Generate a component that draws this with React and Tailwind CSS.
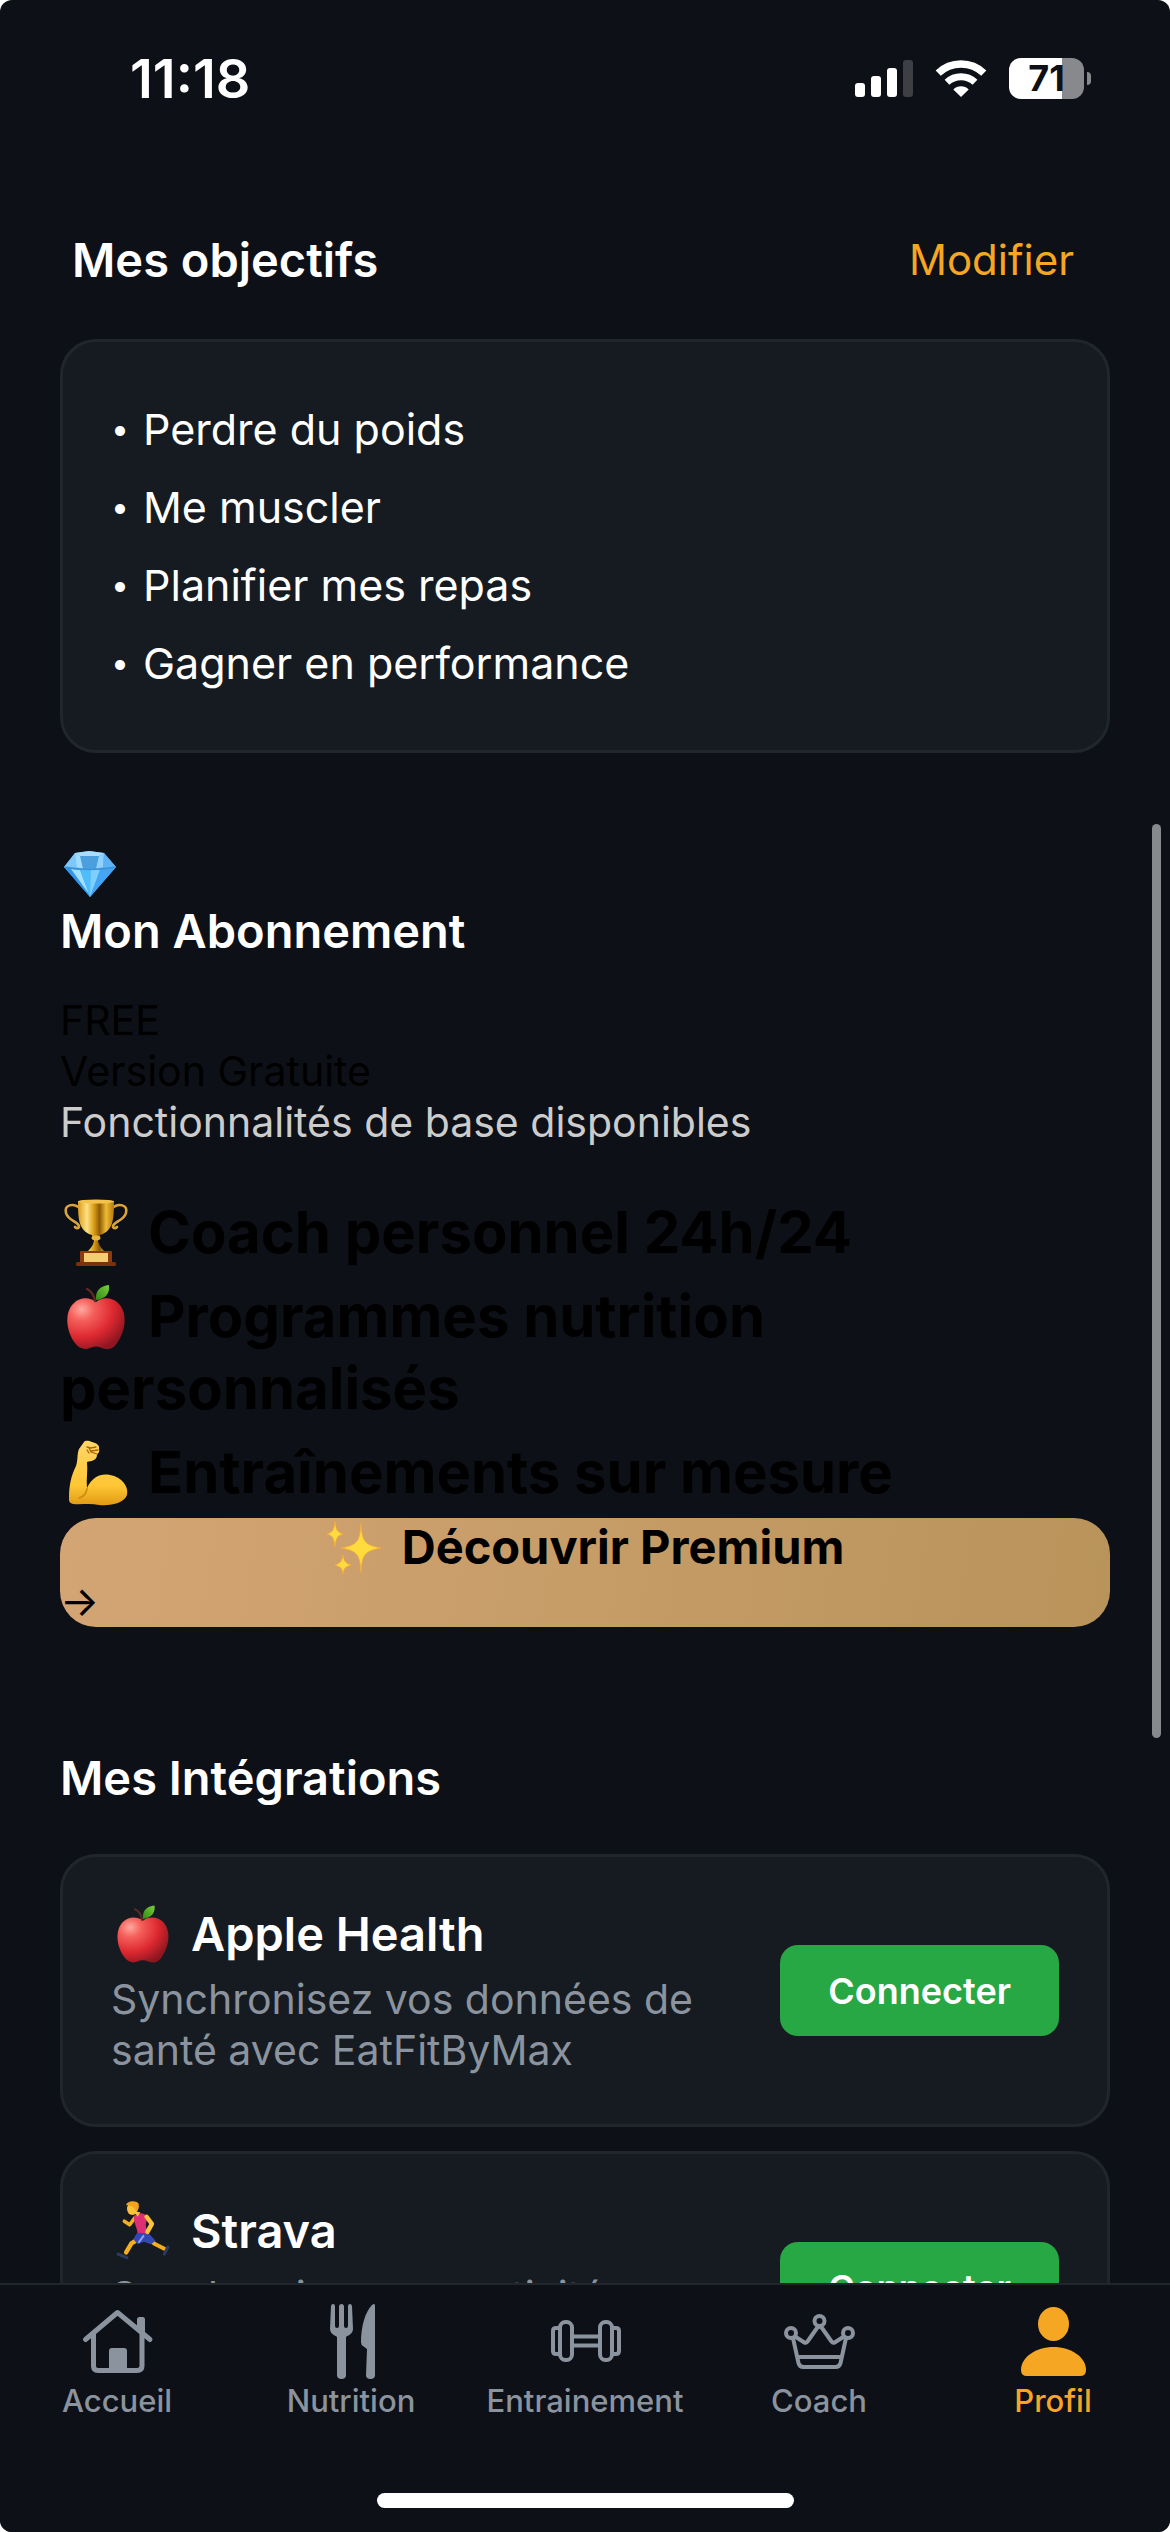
import React from "react";

function SignalIcon() {
  return (
    <svg className="h-[38px] w-[58px]" viewBox="0 0 58 38" aria-hidden="true">
      <g fill="#fff">
        <rect x="0" y="24" width="10" height="14" rx="3" />
        <rect x="16" y="17" width="10" height="21" rx="3" />
        <rect x="32" y="9" width="10" height="29" rx="3" />
      </g>
      <rect x="48" y="1" width="10" height="37" rx="3" fill="#3d3f45" />
    </svg>
  );
}

function WifiIcon() {
  return (
    <svg className="h-[38px] w-[52px]" viewBox="0 0 52 38" aria-hidden="true">
      <g fill="none" stroke="#fff">
        <path d="M3.2 14.2 A33 33 0 0 1 48.8 14.2" strokeWidth="7.4" />
        <path d="M12 23.2 A20.5 20.5 0 0 1 40 23.2" strokeWidth="7" />
      </g>
      <path d="M26 38 L18.3 30.4 A11 11 0 0 1 33.7 30.4 Z" fill="#fff" />
    </svg>
  );
}

function Battery() {
  return (
    <div className="flex items-center gap-[3px]">
      <div className="flex h-[41px] w-[75px] items-center justify-center rounded-xl bg-[linear-gradient(to_right,#fff_71%,#88898d_71%)] text-[36px] leading-none font-bold text-[#0d1017]">
        71
      </div>
      <div className="h-[13px] w-1 rounded-r-full bg-[#88898d]" />
    </div>
  );
}

function Diamond({ className }) {
  return (
    <svg className={className} viewBox="0 0 60 56" aria-hidden="true">
      <path d="M15 7 L29 5 L44 7 L56 21 L30 51 L4 21 Z" fill="#4fb2f8" />
      <path d="M4 21 L15 7 L19 22 Z" fill="#7cc8fb" />
      <path d="M15 7 L29 5 L44 7 L39 10 H20 Z" fill="#a9dcfd" />
      <path d="M20 10 H39 L36 23 H23 Z" fill="#4a9fdc" />
      <path d="M15 7 L20 10 L23 23 L17 21 Z" fill="#a4dcff" />
      <path d="M44 7 L39 10 L36 23 L43 21 Z" fill="#93d1fd" />
      <path d="M44 7 L56 21 L43 22 Z" fill="#5db4f5" />
      <path d="M4 21 L19 23 L30 51 Z" fill="#2e96ee" />
      <path d="M11 23 L20 24 L29 48 Z" fill="#a5e1ff" />
      <path d="M20 24 H40 L30 51 Z" fill="#50bdfb" />
      <path d="M31 24 H40 L30 51 Z" fill="#7dd0ff" />
      <path d="M40 24 L56 21 L30 51 Z" fill="#43a5f3" />
      <path d="M4 21 Q30 26 56 21" stroke="#3d93d5" strokeWidth="1.5" fill="none" />
    </svg>
  );
}

function Trophy({ className }) {
  return (
    <svg className={className} viewBox="0 0 72 72" aria-hidden="true">
      <defs>
        <linearGradient id="cup" x1="0" x2="1">
          <stop offset="0" stopColor="#d99a1c" />
          <stop offset=".25" stopColor="#ffe184" />
          <stop offset=".45" stopColor="#d69a12" />
          <stop offset=".6" stopColor="#8c5a06" />
          <stop offset=".78" stopColor="#eebb35" />
          <stop offset="1" stopColor="#b0780c" />
        </linearGradient>
      </defs>
      <path d="M21 12 C13 5 4 8 6 16 C8 24 20 25 19 30 C18 32 16 31 15 30" fill="none" stroke="#dba53a" strokeWidth="2.6" strokeLinecap="round" />
      <path d="M51 12 C59 5 68 8 66 16 C64 24 52 25 53 30 C54 32 56 31 57 30" fill="none" stroke="#dba53a" strokeWidth="2.6" strokeLinecap="round" />
      <path d="M18 4 C18 20 18 34 32 38 L34 44 C33 49 30 52 27 55 H45 C42 52 39 49 38 44 L40 38 C54 34 54 20 54 4 Z" fill="url(#cup)" />
      <ellipse cx="36" cy="4.5" rx="18" ry="2" fill="#f3c34b" />
      <ellipse cx="36" cy="41" rx="4.5" ry="2.4" fill="#e8b63c" />
      <rect x="20" y="54" width="32" height="13" rx="1" fill="#8a3b10" />
      <rect x="24" y="56" width="24" height="9" fill="#f3cd72" />
      <rect x="16" y="65" width="40" height="4" rx="1.5" fill="#7d300c" />
    </svg>
  );
}

function Apple({ className }) {
  return (
    <svg className={className} viewBox="0 0 72 72" aria-hidden="true">
      <defs>
        <radialGradient id="apple-skin" cx=".25" cy=".22" r=".85">
          <stop offset="0" stopColor="#ffa9a0" />
          <stop offset=".25" stopColor="#f5615c" />
          <stop offset=".65" stopColor="#dc2830" />
          <stop offset="1" stopColor="#8e1620" />
        </radialGradient>
        <linearGradient id="apple-leaf" x1="0" x2="1" y1="1" y2="0">
          <stop offset="0" stopColor="#2f8a14" />
          <stop offset="1" stopColor="#79cf3a" />
        </linearGradient>
      </defs>
      <path d="M36 21 C42 16 52 16 58 22 C68 31 66 50 57 62 C53 69 46 69 42 67 C38 65 34 65 30 67 C25 69 19 68 15 62 C6 50 4 31 14 22 C20 16 30 16 36 21 Z" fill="url(#apple-skin)" />
      <path d="M35 20 C34 14 31 10 27 8" fill="none" stroke="#5b2b20" strokeWidth="2.4" strokeLinecap="round" />
      <path d="M36 19 C35 10 40 5 49 4 C50 12 46 18 36 19 Z" fill="url(#apple-leaf)" />
    </svg>
  );
}

function FlexedArm({ className }) {
  return (
    <svg className={className} viewBox="0 0 72 72" aria-hidden="true">
      <defs>
        <linearGradient id="arm-skin" x1="0" x2="0" y1="0" y2="1">
          <stop offset="0" stopColor="#ffd667" />
          <stop offset=".7" stopColor="#ffc634" />
          <stop offset="1" stopColor="#e09a14" />
        </linearGradient>
      </defs>
      <path d="M19 12 L24 5 C26 3 29 4 32 5 C36 6 40 8 39 12 C40 15 38 16 37 18 C37 23 32 24 27 25 C28 34 26 42 27 51 C32 40 41 36 50 38 C62 40 69 50 67 58 C64 66 52 69 39 68 C30 66 21 68 13 67 C9 66 9 64 9 61 C9 49 11 39 16 29 C18 24 17 16 19 12 Z" fill="url(#arm-skin)" />
      <path d="M27 52 C26 57 23 60 19 61" fill="none" stroke="#d08d13" strokeWidth="1.8" strokeLinecap="round" />
      <path d="M27 10 L31 11 L36 10 M38 13 L31 14 M29 11 L31 15 L37 17 M27 13 L29 16" fill="none" stroke="#a8660c" strokeWidth="1.3" strokeLinecap="round" />
    </svg>
  );
}

function Sparkles({ className }) {
  return (
    <svg className={className} viewBox="0 0 56 56" aria-hidden="true">
      <g fill="#ffdb3d" stroke="#f6a93a" strokeWidth=".8">
        <path d="M35 4 C36 22 38 26 55 29 C38 32 36 36 35 54 C34 36 32 32 15 29 C32 26 34 22 35 4 Z" />
        <path d="M9 2 C10 11 11 13 17 15 C11 17 10 19 9 28 C8 19 7 17 1 15 C7 13 8 11 9 2 Z" />
        <path d="M17 36 C18 42 19 44 25 46 C19 48 18 49 17 55 C16 49 15 48 9 46 C15 44 16 42 17 36 Z" />
      </g>
    </svg>
  );
}

function Runner({ className }) {
  return (
    <svg className={className} viewBox="0 0 72 72" aria-hidden="true">
      <g fill="none" strokeLinecap="round" strokeLinejoin="round">
        <path d="M27 21 L21 29 L15 25" stroke="#f5b021" strokeWidth="4" />
        <path d="M31 45 L23 50 L17 60" stroke="#f5ae1d" strokeWidth="5" />
        <path d="M43 46 L50 51 L60 56" stroke="#f5ae1d" strokeWidth="4.5" />
        <path d="M8 62 L18 66" stroke="#2b3b60" strokeWidth="3.6" />
        <path d="M60 62 L64 54" stroke="#2b3b60" strokeWidth="3.4" />
      </g>
      <path d="M30 37 L42 38 L50 47 L45 51 L37 48 L30 51 L25 45 Z" fill="#3347b5" />
      <path d="M37 41 L31 49" stroke="#8fa6ee" strokeWidth="2.2" />
      <path d="M26 19 C30 15 37 15 41 20 L39 29 L41 39 L30 38 C29 31 25 26 26 19 Z" fill="#dd2f74" />
      <path d="M40 20 L46 28 L41 37" fill="none" stroke="#fcc23a" strokeWidth="5" strokeLinecap="round" strokeLinejoin="round" />
      <ellipse cx="24" cy="11" rx="6" ry="7" fill="#fcc23a" />
      <path d="M17 7 C18 2 28 1 31 5 C32 9 31 13 28 14 C27 10 24 7 17 7 Z" fill="#f2a31c" />
      <path d="M26 14 L33 15 L30 20 Z" fill="#fcc23a" />
    </svg>
  );
}

const tabIcon = "h-20 w-20";

function HomeIcon() {
  return (
    <svg className={tabIcon} viewBox="0 0 80 80" aria-hidden="true">
      <g fill="none" stroke="currentColor" strokeWidth="5" strokeLinecap="round" strokeLinejoin="round">
        <path d="M8.5 39.5 L40.5 12.5 L73 39.5" />
        <path d="M16.5 34 V66 Q16.5 70.5 21 70.5 H60 Q65 70.5 65 66 V34" />
      </g>
      <path d="M60 29 V19.5 Q60 17 62.500 17 H65.500 Q68 17 68 19.500 V36 Z" fill="currentColor" />
      <path d="M32 71 V51 Q32 48 35 48 H47 Q50 48 50 51 V71 Z" fill="currentColor" />
    </svg>
  );
}

function CutleryIcon() {
  return (
    <svg className={tabIcon} viewBox="0 0 80 80" aria-hidden="true">
      <g fill="currentColor">
        <path d="M20 6 Q20.500 4 22 4 Q24 4 24 6 V26 Q24 28 26 28 Q28 28 28 26 V6 Q28.500 4 30.500 4 Q32.500 4 33 6 V26 Q33 28 35 28 Q37 28 37 26 V6 Q37 4 39 4 Q40.500 4 41 6 L42 29 Q42 34 35.500 36.500 L35 37 V75 Q35 79 30.500 79 Q26 79 26 75 V37 L25.500 36.500 Q19 34 19 29 Z" />
        <path d="M61 5 Q64 2.500 64 6 V75 Q64 79 59.500 79 Q55 79 55 75 L56 49 L52 46 Q50 45 50 42 C50 27 54 12 61 5 Z" />
      </g>
    </svg>
  );
}

function DumbbellIcon() {
  return (
    <svg className={tabIcon} viewBox="0 0 80 80" aria-hidden="true">
      <g fill="none" stroke="currentColor" strokeWidth="4">
        <rect x="15" y="22" width="12" height="38" rx="5.500" />
        <rect x="55" y="22" width="12" height="38" rx="5.500" />
        <path d="M15 28 H11 Q8 28 8 31 V51 Q8 54 11 54 H15" />
        <path d="M67 28 H71 Q74 28 74 31 V51 Q74 54 71 54 H67" />
        <path d="M28 36.500 H54 M28 45.500 H54" />
      </g>
    </svg>
  );
}

function CrownIcon() {
  return (
    <svg className={tabIcon} viewBox="0 0 80 80" aria-hidden="true">
      <g fill="none" stroke="currentColor" strokeWidth="4" strokeLinejoin="round">
        <circle cx="12" cy="33" r="5" />
        <circle cx="40.500" cy="21" r="5" />
        <circle cx="69" cy="33" r="5" />
        <path d="M16 36.500 L25 42.200 Q27 43.500 28.500 41.500 L38 28 Q40.500 25.500 43 28 L52.500 41.500 Q54 43.500 56 42.200 L65 36.500" />
        <path d="M14 38 L19.500 63 Q20.500 67 24.500 67 H56.500 Q60.500 67 61.500 63 L67 38" />
        <path d="M18 57 H63" />
      </g>
    </svg>
  );
}

function PersonIcon() {
  return (
    <svg className={tabIcon} viewBox="0 0 80 80" aria-hidden="true">
      <g fill="currentColor">
        <ellipse cx="40.500" cy="24" rx="15.500" ry="17" />
        <path d="M8 70 C8 57 23 47 40.500 47 S73 57 73 70 Q73 76 67 76 H14 Q8 76 8 70 Z" />
      </g>
    </svg>
  );
}

const goals = ["Perdre du poids", "Me muscler", "Planifier mes repas", "Gagner en performance"];

const perks = [
  { Icon: Trophy, label: "Coach personnel 24h/24" },
  { Icon: Apple, label: "Programmes nutrition personnalisés" },
  { Icon: FlexedArm, label: "Entraînements sur mesure" },
];

const integrations = [
  { Icon: Apple, name: "Apple Health", text: "Synchronisez vos données de santé avec EatFitByMax" },
  { Icon: Runner, name: "Strava", text: "Synchronisez vos activités sportives" },
];

const tabs = [
  { Icon: HomeIcon, label: "Accueil" },
  { Icon: CutleryIcon, label: "Nutrition" },
  { Icon: DumbbellIcon, label: "Entrainement" },
  { Icon: CrownIcon, label: "Coach" },
  { Icon: PersonIcon, label: "Profil", active: true },
];

const heading = "text-[47px] leading-[57px] font-semibold text-white";
const card = "rounded-[36px] border-[3px] border-[#21262d] bg-[#161b22] p-12";

function Integration({ Icon, name, text }) {
  return (
    <li className={card + " flex items-center justify-between gap-12"}>
      <div className="flex min-w-0 flex-1 flex-col gap-3">
        <h3 className={heading + " flex items-center gap-4"}>
          <Icon className="-my-2 h-[66px] w-16 shrink-0" />
          {name}
        </h3>
        <p className="text-[41px] leading-[51px] text-[#8b949e]">{text}</p>
      </div>
      <button
        type="button"
        aria-label={"Connecter " + name}
        className="h-[91px] shrink-0 rounded-[18px] bg-[#28a745] px-12 text-[36px] font-semibold text-white"
      >
        Connecter
      </button>
    </li>
  );
}

export default function App() {
  return (
    <div className="flex h-screen flex-col overflow-hidden rounded-xl bg-[#0d1017] font-[Inter,'Liberation_Sans',sans-serif] text-black">
      <header className="flex h-[156px] shrink-0 items-center justify-between pr-[79px] pl-[130px] text-white">
        <time className="text-[54px] font-semibold">11:18</time>
        <div className="flex items-center gap-[22px]">
          <SignalIcon />
          <WifiIcon />
          <Battery />
        </div>
      </header>

      <main className="relative min-h-0 flex-1 overflow-hidden px-[60px] pt-[75px]">
        <section>
          <div className="flex items-center justify-between pr-9 pl-3">
            <h2 className={heading}>Mes objectifs</h2>
            <button type="button" className="text-[42px] leading-[51px] text-[#f5a623]">
              Modifier
            </button>
          </div>
          <ul className={card + " mt-[51px]"}>
            {goals.map((goal) => (
              <li key={goal} className="flex items-center gap-[14px] text-[43px] leading-[78px] text-white">
                <span className="w-[18px] text-center text-[32px]">•</span>
                {goal}
              </li>
            ))}
          </ul>
        </section>

        <section className="mt-[93px]">
          <Diamond className="h-[56px] w-[60px]" />
          <h2 className={heading}>Mon Abonnement</h2>
          <div className="mt-9 text-[41px] leading-[51px]">
            <p>FREE</p>
            <p>Version Gratuite</p>
            <p className="text-[#cccccc]">Fonctionnalités de base disponibles</p>
          </div>
          <ul className="mt-[42px] text-[58px] leading-[72px] font-bold">
            {perks.map(({ Icon, label }) => (
              <li key={label} className="py-[6px]">
                <Icon className="-mt-4 mr-4 -mb-4 inline-block size-[72px] align-baseline" />
                {label}
              </li>
            ))}
          </ul>
          <button
            type="button"
            className="mt-1 flex w-full flex-col overflow-hidden rounded-[36px] bg-[linear-gradient(100deg,#d4a574,#b8935a)] text-left"
          >
            <span className="flex items-center justify-center gap-5 self-stretch text-[47px] leading-[58px] font-bold">
              <Sparkles className="h-[56px] w-[56px]" />
              Découvrir Premium
            </span>
            <span className="text-[41px] leading-[51px]">→</span>
          </button>
        </section>

        <section className="mt-[122px]">
          <h2 className={heading}>Mes Intégrations</h2>
          <ul className="mt-12 flex flex-col gap-6">
            {integrations.map((item) => (
              <Integration key={item.name} {...item} />
            ))}
          </ul>
        </section>

        <div className="absolute top-[668px] right-[9px] h-[914px] w-[9px] rounded-full bg-[#88898d]" />
      </main>

      <footer className="shrink-0 border-t-2 border-[#21262d] bg-[#0d1017] pt-[15px] pb-6">
        <nav>
          <ul className="grid grid-cols-5">
            {tabs.map(({ Icon, label, active }) => (
              <li key={label}>
                <a
                  href="#"
                  aria-current={active ? "page" : undefined}
                  className={
                    "flex flex-col items-center text-[31px] leading-[42px] font-medium " +
                    (active ? "text-[#f5a623]" : "text-[#8b949e]")
                  }
                >
                  <Icon />
                  {label}
                </a>
              </li>
            ))}
          </ul>
        </nav>
        <div className="mx-auto mt-[71px] h-[15px] w-[417px] rounded-full bg-white" />
      </footer>
    </div>
  );
}
